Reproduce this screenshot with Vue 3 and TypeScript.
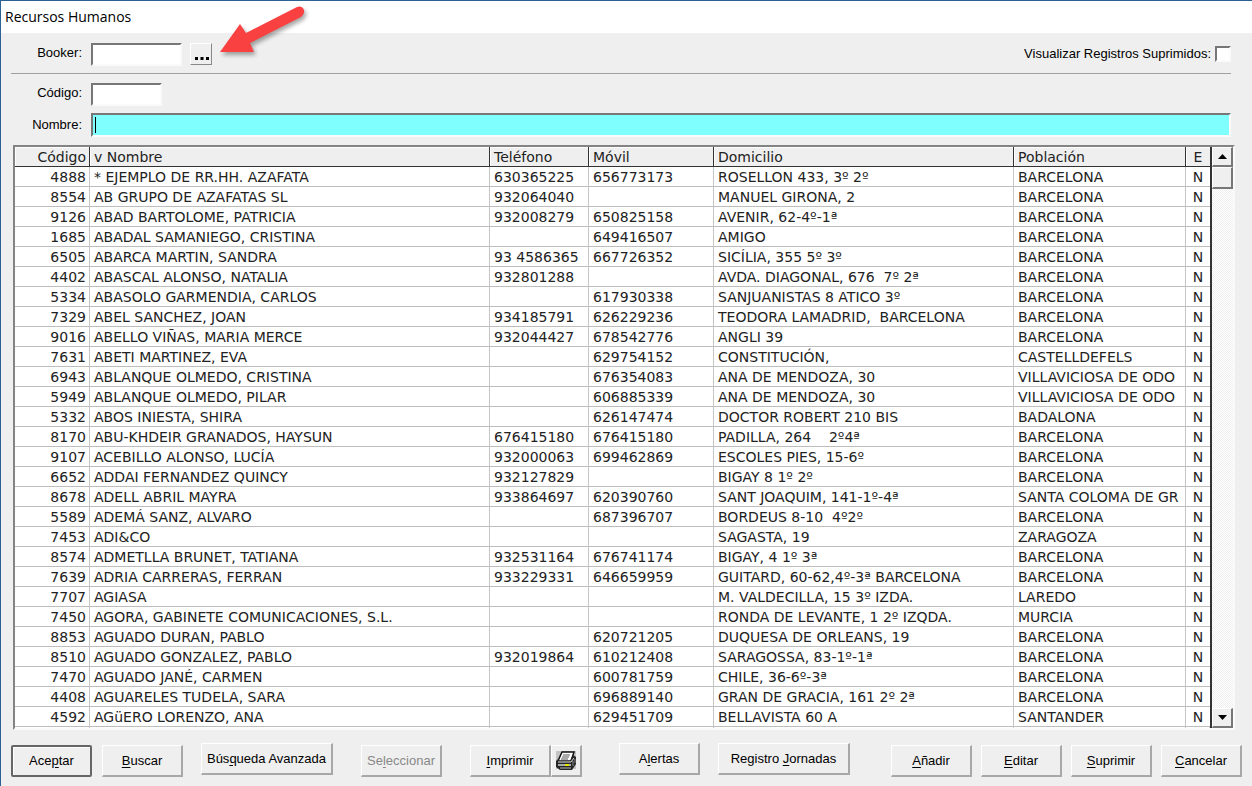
<script setup lang="ts">
import { ref } from 'vue'

type Row = [string, string, string, string, string, string]

const booker = ref('')
const codigo = ref('')
const nombre = ref('')
const suprimidos = ref(false)

const B = 'BARCELONA'
const rows: Row[] = [
  ['4888', '* EJEMPLO DE RR.HH. AZAFATA', '630365225', '656773173', 'ROSELLON 433, 3º 2º', B],
  ['8554', 'AB GRUPO DE AZAFATAS SL', '932064040', '', 'MANUEL GIRONA, 2', B],
  ['9126', 'ABAD BARTOLOME, PATRICIA', '932008279', '650825158', 'AVENIR, 62-4º-1ª', B],
  ['1685', 'ABADAL SAMANIEGO, CRISTINA', '', '649416507', 'AMIGO', B],
  ['6505', 'ABARCA MARTIN, SANDRA', '93 4586365', '667726352', 'SICÍLIA, 355 5º 3º', B],
  ['4402', 'ABASCAL ALONSO, NATALIA', '932801288', '', 'AVDA. DIAGONAL, 676  7º 2ª', B],
  ['5334', 'ABASOLO GARMENDIA, CARLOS', '', '617930338', 'SANJUANISTAS 8 ATICO 3º', B],
  ['7329', 'ABEL SANCHEZ, JOAN', '934185791', '626229236', 'TEODORA LAMADRID,  BARCELONA', B],
  ['9016', 'ABELLO VIÑAS, MARIA MERCE', '932044427', '678542776', 'ANGLI 39', B],
  ['7631', 'ABETI MARTINEZ, EVA', '', '629754152', 'CONSTITUCIÓN,', 'CASTELLDEFELS'],
  ['6943', 'ABLANQUE OLMEDO, CRISTINA', '', '676354083', 'ANA DE MENDOZA, 30', 'VILLAVICIOSA DE ODO'],
  ['5949', 'ABLANQUE OLMEDO, PILAR', '', '606885339', 'ANA DE MENDOZA, 30', 'VILLAVICIOSA DE ODO'],
  ['5332', 'ABOS INIESTA, SHIRA', '', '626147474', 'DOCTOR ROBERT 210 BIS', 'BADALONA'],
  ['8170', 'ABU-KHDEIR GRANADOS, HAYSUN', '676415180', '676415180', 'PADILLA, 264    2º4ª', B],
  ['9107', 'ACEBILLO ALONSO, LUCÍA', '932000063', '699462869', 'ESCOLES PIES, 15-6º', B],
  ['6652', 'ADDAI FERNANDEZ QUINCY', '932127829', '', 'BIGAY 8 1º 2º', B],
  ['8678', 'ADELL ABRIL MAYRA', '933864697', '620390760', 'SANT JOAQUIM, 141-1º-4ª', 'SANTA COLOMA DE GR'],
  ['5589', 'ADEMÁ SANZ, ALVARO', '', '687396707', 'BORDEUS 8-10  4º2º', B],
  ['7453', 'ADI&CO', '', '', 'SAGASTA, 19', 'ZARAGOZA'],
  ['8574', 'ADMETLLA BRUNET, TATIANA', '932531164', '676741174', 'BIGAY, 4 1º 3ª', B],
  ['7639', 'ADRIA CARRERAS, FERRAN', '933229331', '646659959', 'GUITARD, 60-62,4º-3ª BARCELONA', B],
  ['7707', 'AGIASA', '', '', 'M. VALDECILLA, 15 3º IZDA.', 'LAREDO'],
  ['7450', 'AGORA, GABINETE COMUNICACIONES, S.L.', '', '', 'RONDA DE LEVANTE, 1 2º IZQDA.', 'MURCIA'],
  ['8853', 'AGUADO DURAN, PABLO', '', '620721205', 'DUQUESA DE ORLEANS, 19', B],
  ['8510', 'AGUADO GONZALEZ, PABLO', '932019864', '610212408', 'SARAGOSSA, 83-1º-1ª', B],
  ['7470', 'AGUADO JANÉ, CARMEN', '', '600781759', 'CHILE, 36-6º-3ª', B],
  ['4408', 'AGUARELES TUDELA, SARA', '', '696889140', 'GRAN DE GRACIA, 161 2º 2ª', B],
  ['4592', 'AGüERO LORENZO, ANA', '', '629451709', 'BELLAVISTA 60 A', 'SANTANDER'],
]
</script>

<template>
  <main class="window">
    <header class="title">Recursos Humanos</header>

    <section class="filters">
      <div class="line booker">
        <label for="booker">Booker:</label>
        <input id="booker" v-model="booker" class="field w90" type="text">
        <button class="dots" type="button" aria-label="Elegir booker">
          <svg width="14" height="3" viewBox="0 0 14 3"><path d="M0 0h3v3H0zM5.500 0h3v3h-3zM11 0h3v3h-3z" fill="#000" /></svg>
        </button>
        <span class="check">
          <label for="sup">Visualizar Registros Suprimidos:</label>
          <input id="sup" v-model="suprimidos" type="checkbox">
        </span>
      </div>
      <div class="line codigo">
        <label for="codigo">Código:</label>
        <input id="codigo" v-model="codigo" class="field w70" type="text">
      </div>
      <div class="line nombre">
        <label for="nombre">Nombre:</label>
        <span class="active"><input id="nombre" v-model="nombre" class="field cyan" type="text"></span>
      </div>
    </section>

    <section class="grid">
      <div class="view">
        <table>
          <colgroup>
            <col class="c1"><col><col class="c3"><col class="c4"><col class="c5"><col class="c6"><col class="c7">
          </colgroup>
          <thead>
            <tr>
              <th class="num">Código</th><th>v Nombre</th><th>Teléfono</th><th>Móvil</th><th>Domicilio</th><th>Población</th><th class="mid">E</th>
            </tr>
          </thead>
          <tbody>
            <tr v-for="row in rows" :key="row[0]">
              <td v-for="(cell, i) in row" :key="i" :class="{ num: i === 0 }">{{ cell }}</td>
              <td class="mid">N</td>
            </tr>
            <tr aria-hidden="true"><td v-for="n in 7" :key="n"></td></tr>
          </tbody>
        </table>
      </div>
      <div class="scroll">
        <button type="button" aria-label="Subir"><svg width="9" height="5" viewBox="0 0 9 5"><path d="M4.500 0L9 5H0z" /></svg></button>
        <div class="thumb"></div>
        <button class="down" type="button" aria-label="Bajar"><svg width="9" height="5" viewBox="0 0 9 5"><path d="M0 0h9L4.500 5z" /></svg></button>
      </div>
    </section>

    <footer class="actions">
      <button class="btn default" type="button">Ace<u>p</u>tar</button>
      <button class="btn g10" type="button"><u>B</u>uscar</button>
      <button class="btn wide up g18" type="button">Bús<u>q</u>ueda Avanzada</button>
      <button class="btn g28" type="button" disabled>Se<u>l</u>eccionar</button>
      <button class="btn g28" type="button"><u>I</u>mprimir</button>
      <button class="btn print" type="button" aria-label="Impresora">
        <svg width="22" height="22" viewBox="0 0 22 22">
          <path d="M1 1h20v18H1z" fill="#c3c3c3" />
          <path d="M7 2h12l-3 9H3z" fill="#fff" stroke="#111" stroke-width="1.500" />
          <path d="M8 5h7M7 7h7M6 9h7" stroke="#555" />
          <path d="M1 11l3-3v3h11l3-6 3 2v7l-4 6H5l-4-3z" fill="#252525" />
          <path d="M3 12h13l3-4" stroke="#ddd" fill="none" />
          <path d="M3 14h13v2H3z" fill="#aaa" />
          <path d="M10 14h4v2h-4z" fill="#e6e600" />
          <path d="M5 18h11" stroke="#bbb" />
          <path d="M18 11v5M20 9v4" stroke="#888" />
        </svg>
      </button>
      <button class="btn up g36" type="button">A<u>l</u>ertas</button>
      <button class="btn wide up g18" type="button">Registro <u>J</u>ornadas</button>
      <div class="edit">
        <button class="btn" type="button"><u>A</u>ñadir</button>
        <button class="btn" type="button"><u>E</u>ditar</button>
        <button class="btn" type="button"><u>S</u>uprimir</button>
        <button class="btn" type="button"><u>C</u>ancelar</button>
      </div>
    </footer>

    <svg class="arrow" width="100" height="64" viewBox="0 0 100 64" aria-hidden="true">
      <path d="M10 52L30 24L36 33L87 7Q92 5 94 10Q95 14 91 17L40 43L44 52Z" fill="#f94141" />
    </svg>
  </main>
</template>

<style>
body { margin: 0; background: #efefef; }
</style>

<style scoped>
* { box-sizing: border-box; }
.window {
  position: relative;
  display: flex;
  flex-direction: column;
  height: 100vh;
  border-top: 1px solid #2b6295;
  border-left: 1px solid #2b6295;
  background: #efefef;
  color: #000;
  font: 13px/16px "Liberation Sans", Arial, sans-serif;
  overflow: hidden;
}
.title {
  flex: none;
  height: 32px;
  padding-left: 4px;
  background: #fff;
  font: 14px/32px "Open Sans", "Segoe UI", sans-serif;
}
.filters { flex: none; padding: 0 21px 0 10px; }
.line { display: flex; align-items: flex-start; }
.line > label { width: 71px; margin-right: 9px; text-align: right; }
.booker { height: 41px; padding-top: 10px; border-bottom: 1px solid #a0a0a0; }
.booker > label { padding-top: 2px; }
.codigo { height: 39px; padding-top: 9px; }
.codigo > label { padding-top: 2px; }
.nombre > label { padding-top: 4px; }
.field {
  height: 23px;
  margin: 0;
  padding: 0 4px;
  border: 2px solid #fafafa;
  border-top-color: #777;
  border-left-color: #777;
  border-radius: 0;
  background: #fff;
  font: inherit;
  outline: none;
}
.w90 { width: 91px; }
.w70 { width: 71px; }
.active { position: relative; flex: 1; display: flex; }
.active::after {
  content: "";
  position: absolute;
  left: 4px;
  top: 4px;
  width: 1px;
  height: 16px;
  background: #000;
}
.cyan { width: 100%; height: 24px; background: #80ffff; }
.dots {
  display: flex;
  align-items: flex-end;
  justify-content: center;
  width: 22px;
  height: 22px;
  margin-left: 8px;
  padding: 0 0 4px 1px;
  border: 1px solid #fff;
  border-right-color: #888;
  border-bottom-color: #888;
  background: #efefef;
}
.check { display: flex; gap: 4px; align-items: center; margin-left: auto; padding-top: 3px; }
.check input {
  appearance: none;
  width: 16px;
  height: 16px;
  margin: 0;
  border: 2px solid #fafafa;
  border-top-color: #777;
  border-left-color: #777;
  background: #fff;
}
.check input:checked { background: #333; }
.grid {
  flex: 1;
  min-height: 0;
  display: flex;
  margin: 8px 17px 0 12px;
  border: 2px solid #fafafa;
  border-top-color: #848484;
  border-left-color: #848484;
  background: #fff;
}
.view { flex: 1; min-width: 0; overflow: hidden; border-right: 2px solid #333; }
table {
  width: 100%;
  table-layout: fixed;
  border-collapse: separate;
  border-spacing: 0;
  font: 14px/17px "DejaVu Sans", Verdana, sans-serif;
  color: #222;
}
.c1 { width: 75px; }
.c3 { width: 99px; }
.c4 { width: 125px; }
.c5 { width: 300px; }
.c6 { width: 172px; }
.c7 { width: 24px; }
th, td {
  height: 20px;
  padding: 2px 3px 0 4px;
  border-right: 1px solid #c6c6c6;
  border-bottom: 1px solid #bdbdbd;
  overflow: hidden;
  white-space: pre;
  text-align: left;
  font-weight: normal;
}
th {
  border-right-color: #333;
  border-bottom-color: #333;
  background: #efefef;
  box-shadow: inset 1px 1px #fff;
}
.num { text-align: right; }
.mid { padding: 2px 0 0; text-align: center; border-right: 0; }
.scroll {
  display: flex;
  flex-direction: column;
  width: 21px;
  background: repeating-conic-gradient(#efefef 0 25%, #fff 0 50%) 0 0 / 2px 2px;
}
.scroll button, .thumb {
  display: flex;
  align-items: center;
  justify-content: center;
  flex: none;
  width: 21px;
  height: 20px;
  padding: 0;
  border: 1px solid #fff;
  border-right: 2px solid #777;
  border-bottom: 2px solid #777;
  background: #efefef;
}
.thumb { height: 22px; }
.scroll .down { margin-top: auto; }
.actions { flex: none; display: flex; height: 56px; padding: 13px 10px 9px; align-items: flex-end; }
.btn {
  flex: none;
  width: 81px;
  height: 32px;
  margin: 0;
  padding: 0;
  border: 1px solid #fff;
  border-right: 2px solid #a8a8a8;
  border-bottom: 2px solid #a8a8a8;
  border-radius: 0;
  background: #efefef;
  color: #000;
  font: inherit;
  white-space: nowrap;
}
.btn:disabled { color: #888; }
.btn u { text-underline-offset: 2px; }
.default { border: 2px solid #666; border-radius: 2px; box-shadow: inset 1px 1px #fff; }
.wide { width: 132px; }
.up { align-self: flex-start; }
.print { display: flex; align-items: center; justify-content: center; width: 31px; }
.g10 { margin-left: 10px; }
.g18 { margin-left: 18px; }
.g28 { margin-left: 28px; }
.g36 { margin-left: 37px; }
.edit { display: flex; gap: 9px; margin-left: auto; }
.arrow {
  position: absolute;
  left: 209px;
  top: -1px;
  filter: drop-shadow(2px 3px 2px rgba(0, 0, 0, 0.35));
  pointer-events: none;
}
</style>
